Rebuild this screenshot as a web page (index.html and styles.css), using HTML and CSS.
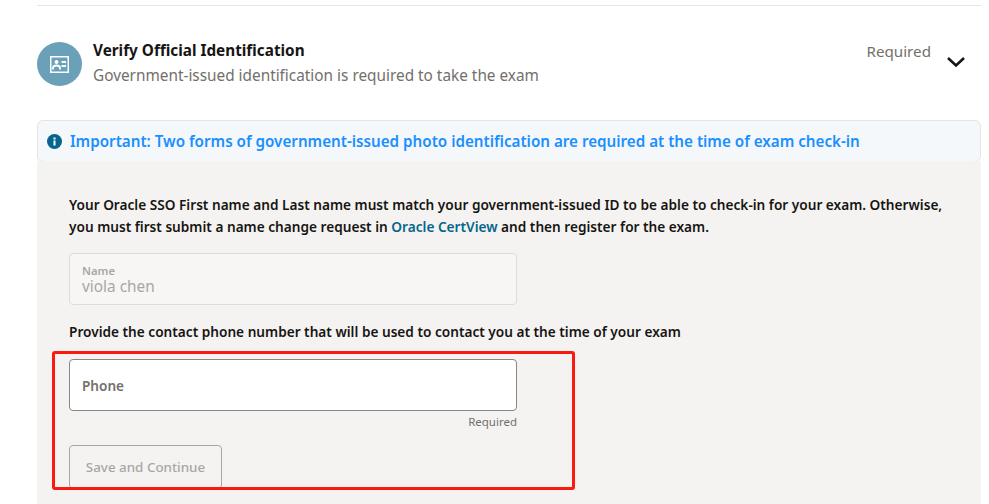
FILE: index.html
```html
<!DOCTYPE html>
<html lang="en">

<head>
    <meta charset="UTF-8">
    <meta name="viewport" content="width=device-width, initial-scale=1.0">
    <title>Verify Official Identification</title>
    <link rel="stylesheet" href="styles.css">
</head>

<body>
    <div class="page">

        <!-- Step header -->
        <div class="step-head">
            <div class="step-icon">
                <svg width="19" height="17" viewBox="0 0 19 17">
                    <rect x="0.750" y="0.750" width="17.500" height="15.500" fill="#6ba1b8" stroke="#fff" stroke-width="1.500"/>
                    <circle cx="6.500" cy="6" r="2" fill="#fff"/>
                    <path d="M3 13.500v-1.500q0-2.500 3.500-2.500t3.500 2.500v1.500" fill="none" stroke="#fff" stroke-width="1.800"/>
                    <path d="M11.500 6h4.500M11.500 10h4.500" stroke="#fff" stroke-width="1.800"/>
                </svg>
            </div>
            <div class="step-text">
                <h2>Verify Official Identification</h2>
                <p>Government-issued identification is required to take the exam</p>
            </div>
            <span class="step-status">Required</span>
            <svg class="chevron" width="20" height="12" viewBox="0 0 20 12">
                <path d="M2 2l8 7.500 8-7.500" fill="none" stroke="#161513" stroke-width="2.600"/>
            </svg>
        </div>

        <!-- Info banner -->
        <div class="notice">
            <svg width="15" height="15" viewBox="0 0 15 15">
                <circle cx="7.500" cy="7.500" r="7.500" fill="#04668c"/>
                <rect x="6.500" y="6.500" width="2" height="5" fill="#fff"/>
                <rect x="6.500" y="3.500" width="2" height="2" fill="#fff"/>
            </svg>
            <span>Important: Two forms of government-issued photo identification are required at the time of exam check-in</span>
        </div>

        <!-- Form panel -->
        <div class="panel">
            <p class="intro">Your Oracle SSO First name and Last name must match your government-issued ID to be able to check-in for your exam. Otherwise, you must first submit a name change request in <a href="#">Oracle CertView</a> and then register for the exam.</p>

            <div class="field field-readonly">
                <label>Name</label>
                <span>viola chen</span>
            </div>

            <p class="phone-note">Provide the contact phone number that will be used to contact you at the time of your exam</p>

            <div class="field field-phone">
                <label>Phone</label>
            </div>
            <div class="hint">Required</div>

            <button class="save-btn" disabled>Save and Continue</button>

            <!-- Red annotation drawn over the screenshot -->
            <div class="annotation"></div>
        </div>
    </div>
</body>

</html>
```

FILE: styles.css
```css
html,
body {
    margin: 0;
    height: 504px;
    overflow: hidden;
    background: #fff;
}

body {
    font-family: "Noto Sans", "Open Sans", sans-serif;
    color: #161513;
}

.page {
    margin: 5px 8px 0 37px;
    border-top: 1px solid #e6e5e3;
}

/* Step header */
.step-head {
    display: flex;
    align-items: flex-start;
    padding-top: 36px;
    height: 78px;
}

.step-icon {
    width: 45px;
    height: 44px;
    border-radius: 50%;
    background: #6ba1b8;
    display: flex;
    align-items: center;
    justify-content: center;
    margin-right: 11px;
}

.step-text {
    flex: 1;
}

.step-text h2 {
    margin: -3px 0 0;
    font-size: 15.300px;
    line-height: 22px;
    font-weight: 700;
}

.step-text p {
    margin: 3px 0 0;
    font-size: 15.350px;
    line-height: 22px;
    color: #736f6b;
}

.step-status {
    font-size: 15.200px;
    line-height: 22px;
    margin-top: -3px;
    padding-top: 1px;
    color: #736f6b;
}

.chevron {
    margin: 14px 15px 0 15px;
}

/* Info banner */
.notice {
    display: flex;
    align-items: center;
    gap: 8px;
    height: 40px;
    padding-left: 9px;
    background: #f5f8fb;
    border: 1px solid #e4e4e2;
    border-radius: 6px;
    font-size: 15.200px;
    font-weight: 600;
    color: #1a8fff;
    position: relative;
}

/* Form panel */
.panel {
    box-sizing: border-box;
    position: relative;
    background: #f5f3f1;
    margin-top: -1px;
    padding: 33px 32px 0;
    height: 343px;
}

.intro,
.phone-note {
    margin: 0;
    font-size: 13.650px;
    line-height: 22px;
    font-weight: 600;
}

.intro a {
    color: #04668c;
    text-decoration: none;
}

.field {
    box-sizing: border-box;
    width: 448px;
    height: 52px;
    border-radius: 4px;
    padding: 0 12px;
    display: flex;
    flex-direction: column;
    justify-content: center;
}

.field label {
    font-size: 13.600px;
    font-weight: 600;
    color: #736f6b;
}

.field-readonly {
    margin-top: 15px;
    padding-top: 2px;
    border: 1px solid #dedcd9;
    background: #f7f6f5;
}

.field-readonly label {
    font-size: 11.300px;
    line-height: 13px;
    color: #a9a6a2;
}

.field-readonly span {
    font-size: 15.400px;
    line-height: 19px;
    color: #a9a6a2;
}

.phone-note {
    margin-top: 16px;
}

.field-phone {
    margin-top: 16px;
    border: 1px solid #8a8783;
    background: #fff;
}

.hint {
    width: 448px;
    text-align: right;
    font-size: 11.500px;
    line-height: 16px;
    margin-top: 3px;
    color: #736f6b;
}

.save-btn {
    display: block;
    margin-top: 15px;
    width: 153px;
    height: 44px;
    padding: 0;
    border: 1px solid #a9a6a2;
    border-radius: 4px;
    background: transparent;
    font-family: inherit;
    font-size: 13.400px;
    font-weight: 500;
    color: #a9a6a2;
}

.annotation {
    position: absolute;
    left: 15px;
    top: 190px;
    width: 517px;
    height: 133px;
    border: 3px solid #fb1a10;
    border-radius: 3px;
}
```
